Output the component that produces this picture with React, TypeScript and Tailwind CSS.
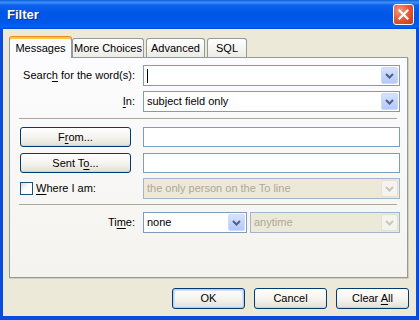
import React from 'react';

const Chevron: React.FC<{ disabled?: boolean }> = ({ disabled }) => (
  <svg width="9" height="6" viewBox="0 0 9 6" fill="none">
    <path d="M1 1L4.5 4.5L8 1" stroke={disabled ? '#C9C7BA' : '#4D6185'} strokeWidth={2} />
  </svg>
);

const DropBtn: React.FC<{ disabled?: boolean }> = ({ disabled }) => (
  <div
    className={
      'w-[17px] h-[17px] shrink-0 rounded-[2px] border flex items-center justify-center ' +
      (disabled
        ? 'border-[#E3E1D5] bg-[#F4F3EE]'
        : 'border-[#CCDAFC] bg-gradient-to-b from-[#D6E2FD] to-[#B4C9F7]')
    }
  >
    <Chevron disabled={disabled} />
  </div>
);

const Combo: React.FC<{ text?: string; disabled?: boolean; caret?: boolean; className?: string }> = ({
  text,
  disabled,
  caret,
  className = '',
}) => (
  <div
    className={
      'h-[21px] flex items-center p-[1px] border ' +
      (disabled ? 'border-[#A3B5CA] bg-[#ECE9D8] text-[#ACA899] ' : 'border-[#7F9DB9] bg-white ') +
      className
    }
  >
    <div className="flex-1 pl-[2px] flex items-center whitespace-nowrap overflow-hidden">
      {caret && <span className="w-px h-[14px] bg-black" />}
      {text}
    </div>
    <DropBtn disabled={disabled} />
  </div>
);

const XpButton: React.FC<{ children: React.ReactNode; isDefault?: boolean; className?: string }> = ({
  children,
  isDefault,
  className = '',
}) => (
  <div
    className={
      'flex items-center justify-center rounded-[3px] border border-[#003C74] bg-gradient-to-b from-white via-[#F5F4EF] to-[#E3E0D5] ' +
      (isDefault
        ? 'shadow-[inset_0_0_0_1px_#B7CCF6,inset_0_0_0_2px_#D4E2FB] '
        : 'shadow-[inset_0_-1px_0_#D6D0C5] ') +
      className
    }
  >
    <span className="whitespace-pre">{children}</span>
  </div>
);

const U: React.FC<{ children: React.ReactNode }> = ({ children }) => (
  <span className="underline underline-offset-[2px]">{children}</span>
);

const Tab: React.FC<{ label: string; w: string }> = ({ label, w }) => (
  <div
    className={
      'h-[19px] ml-[2px] rounded-t-[3px] border border-b-0 border-[#919B9C] bg-gradient-to-b from-white to-[#ECEBE6] flex items-center justify-center ' +
      w
    }
  >
    {label}
  </div>
);

export default function App() {
  return (
    <div className="w-[419px] h-[320px] flex flex-col overflow-hidden text-[11px] text-black font-['Liberation_Sans',Arial,sans-serif]">
      {/* title bar */}
      <div className="h-[29px] shrink-0 flex items-center justify-between pl-[7px] pr-[5px] bg-[linear-gradient(180deg,#0A5FDC_0%,#3D8EF6_8%,#0B62EE_18%,#0056E6_45%,#0058EA_80%,#0063F6_92%,#0049D4_100%)]">
        <span className="text-white font-bold text-[13px] pt-[1px] [text-shadow:1px_1px_0_#0A2A8C]">Filter</span>
        <div className="w-[21px] h-[21px] rounded-[3px] border border-white bg-[radial-gradient(circle_at_30%_30%,#F09A7E,#E1532F_55%,#C43A16)] flex items-center justify-center">
          <svg width="11" height="11" viewBox="0 0 11 11">
            <path d="M1.5 1.5L9.5 9.5M9.5 1.5L1.5 9.5" stroke="white" strokeWidth={2.2} strokeLinecap="square" />
          </svg>
        </div>
      </div>

      {/* body */}
      <div className="flex-1 flex flex-col bg-[#ECE9D8] border-x-[3px] border-b-[4px] border-[#0A4BE0] pl-[6px] pr-[7px] pt-[7px]">
        {/* tabs */}
        <div className="h-[21px] flex items-end">
          <div className="relative z-10 h-[22px] w-[63px] -mb-[1px] rounded-t-[3px] border border-b-0 border-[#919B9C] border-t-[#E68B2C] bg-[#FCFCFE] shadow-[inset_0_2px_0_#FFC73C] flex items-center justify-center pt-[1px]">
            Messages
          </div>
          <Tab label="More Choices" w="w-[72px] !ml-0" />
          <Tab label="Advanced" w="w-[59px]" />
          <Tab label="SQL" w="w-[40px]" />
        </div>

        {/* panel */}
        <div className="w-[399px] h-[221px] shrink-0 border border-[#919B9C] shadow-[1px_1px_0_#D0CDBE] bg-gradient-to-b from-[#FCFCFE] to-[#F4F3EE] pl-[10px] pr-[7px] pt-[7px]">
          <div className="h-[21px] flex items-center">
            <div className="w-[123px] pr-[8px] text-right">
              Searc<U>h</U> for the word(s):
            </div>
            <Combo caret className="flex-1" />
          </div>
          <div className="h-[21px] mt-[5px] flex items-center">
            <div className="w-[123px] pr-[8px] text-right">
              <U>I</U>n:
            </div>
            <Combo text="subject field only" className="flex-1" />
          </div>

          <div className="h-px mt-[6px] -ml-[1px] mr-[3px] bg-[#ACA899]" />

          <div className="h-[20px] mt-[8px] flex items-center">
            <div className="w-[123px]">
              <XpButton className="w-[111px] h-[20px]">
                F<U>r</U>om...
              </XpButton>
            </div>
            <div className="flex-1 h-[20px] border border-[#7F9DB9] bg-white" />
          </div>
          <div className="h-[20px] mt-[6px] flex items-center">
            <div className="w-[123px]">
              <XpButton className="w-[111px] h-[20px]">
                Sent T<U>o</U>...
              </XpButton>
            </div>
            <div className="flex-1 h-[20px] border border-[#7F9DB9] bg-white" />
          </div>
          <div className="h-[21px] mt-[5px] flex items-center">
            <div className="w-[123px] flex items-center">
              <div className="w-[13px] h-[13px] border border-[#1C5180] bg-gradient-to-br from-[#DCDBD5] via-white to-white" />
              <span className="ml-[3px]">
                <U>W</U>here I am:
              </span>
            </div>
            <Combo disabled text="the only person on the To line" className="flex-1" />
          </div>

          <div className="h-px mt-[5px] -ml-[1px] mr-[3px] bg-[#ACA899]" />

          <div className="h-[21px] mt-[7px] flex items-center">
            <div className="w-[123px] pr-[8px] text-right">
              Ti<U>m</U>e:
            </div>
            <Combo text="none" className="w-[104px]" />
            <Combo disabled text="anytime" className="flex-1 ml-[3px]" />
          </div>
        </div>

        {/* dialog buttons */}
        <div className="mt-[10px] flex justify-end gap-[9px]">
          <XpButton isDefault className="w-[73px] h-[21px]">
            OK
          </XpButton>
          <XpButton className="w-[73px] h-[21px]">Cancel</XpButton>
          <XpButton className="w-[73px] h-[21px]">
            Clear <U>A</U>ll
          </XpButton>
        </div>
      </div>
    </div>
  );
}
